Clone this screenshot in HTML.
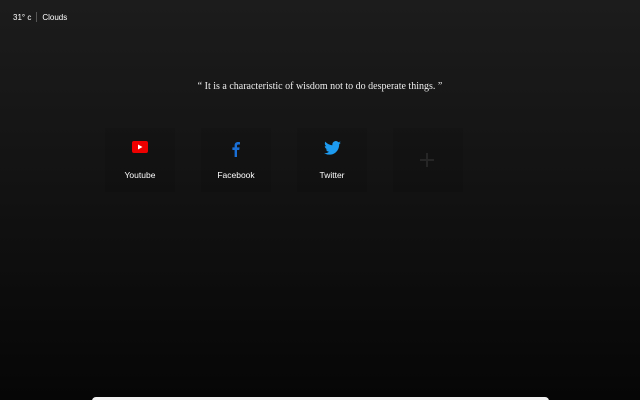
<!DOCTYPE html>
<html><head><meta charset="utf-8"><style>
html,body{margin:0;padding:0;width:640px;height:400px;overflow:hidden}
body{background:linear-gradient(#1c1c1c 0%,#141414 40%,#060606 100%);position:relative;font-family:"Liberation Sans",sans-serif;color:#fff}
.w{position:absolute;top:12px;left:13px;font-size:8px;display:flex;align-items:center}
.w .sep{width:1px;height:10px;background:#555;margin:0 5px}
.q{position:absolute;top:81px;left:0;width:640px;text-align:center;font-family:"Liberation Serif",serif;font-size:10px;color:#eee}
.tile{position:absolute;top:128px;width:70px;height:64px;background:rgba(0,0,0,0.06);text-align:center;font-size:8.5px}
.tile .ic{position:absolute;top:13px;left:0;width:70px;height:14px;display:flex;justify-content:center}
.tile .lb{position:absolute;top:42px;left:0;width:70px}
.bar{position:absolute;left:92px;width:457px;top:397px;height:6px;background:#f2f2f2;border-radius:4px 4px 0 0}
</style></head><body>
<div class="w"><span>31° c</span><span class="sep"></span><span>Clouds</span></div>
<div class="q">“ It is a characteristic of wisdom not to do desperate things. ”</div>
<div class="tile" style="left:105px"><div class="ic"><svg width="16" height="12" viewBox="0 0 16 12"><rect x="0" y="0" width="16" height="12" rx="2" fill="#e00"/><path d="M6 3.5L10.5 6L6 8.5Z" fill="#fff"/></svg></div><div class="lb">Youtube</div></div>
<div class="tile" style="left:201px"><div class="ic"><svg width="8" height="16" viewBox="0 0 8 16"><path d="M5 16V9h2.2l.4-2.6H5V4.8c0-.8.3-1.3 1.4-1.3H8V1.2C7.6 1.1 6.8 1 6 1 4 1 2.6 2.2 2.6 4.4v2H.4V9h2.2v7z" fill="#1a6fd6"/></svg></div><div class="lb">Facebook</div></div>
<div class="tile" style="left:297px"><div class="ic"><svg width="17" height="14" viewBox="0 0 24 20"><path d="M24 2.4c-.9.4-1.8.6-2.8.8 1-.6 1.8-1.6 2.2-2.7-1 .6-2 1-3.1 1.2A4.9 4.9 0 0 0 11.9 6C7.8 5.8 4.2 3.9 1.7.9c-1.3 2.3-.6 5.1 1.5 6.6-.8 0-1.6-.2-2.2-.6 0 2.4 1.7 4.4 3.9 4.9-.7.2-1.5.2-2.2.1.6 2 2.5 3.4 4.6 3.4A9.9 9.9 0 0 1 0 17.3 14 14 0 0 0 7.5 19.5c9.1 0 14.3-7.7 14-14.6 1-.7 1.8-1.6 2.5-2.5z" fill="#1d9bf0"/></svg></div><div class="lb">Twitter</div></div>
<div class="tile" style="left:393px"><div style="position:absolute;left:27px;top:31px;width:14px;height:2px;background:#262626"></div><div style="position:absolute;left:33px;top:25px;width:2px;height:14px;background:#262626"></div></div>
<div class="bar"></div>
</body></html>
